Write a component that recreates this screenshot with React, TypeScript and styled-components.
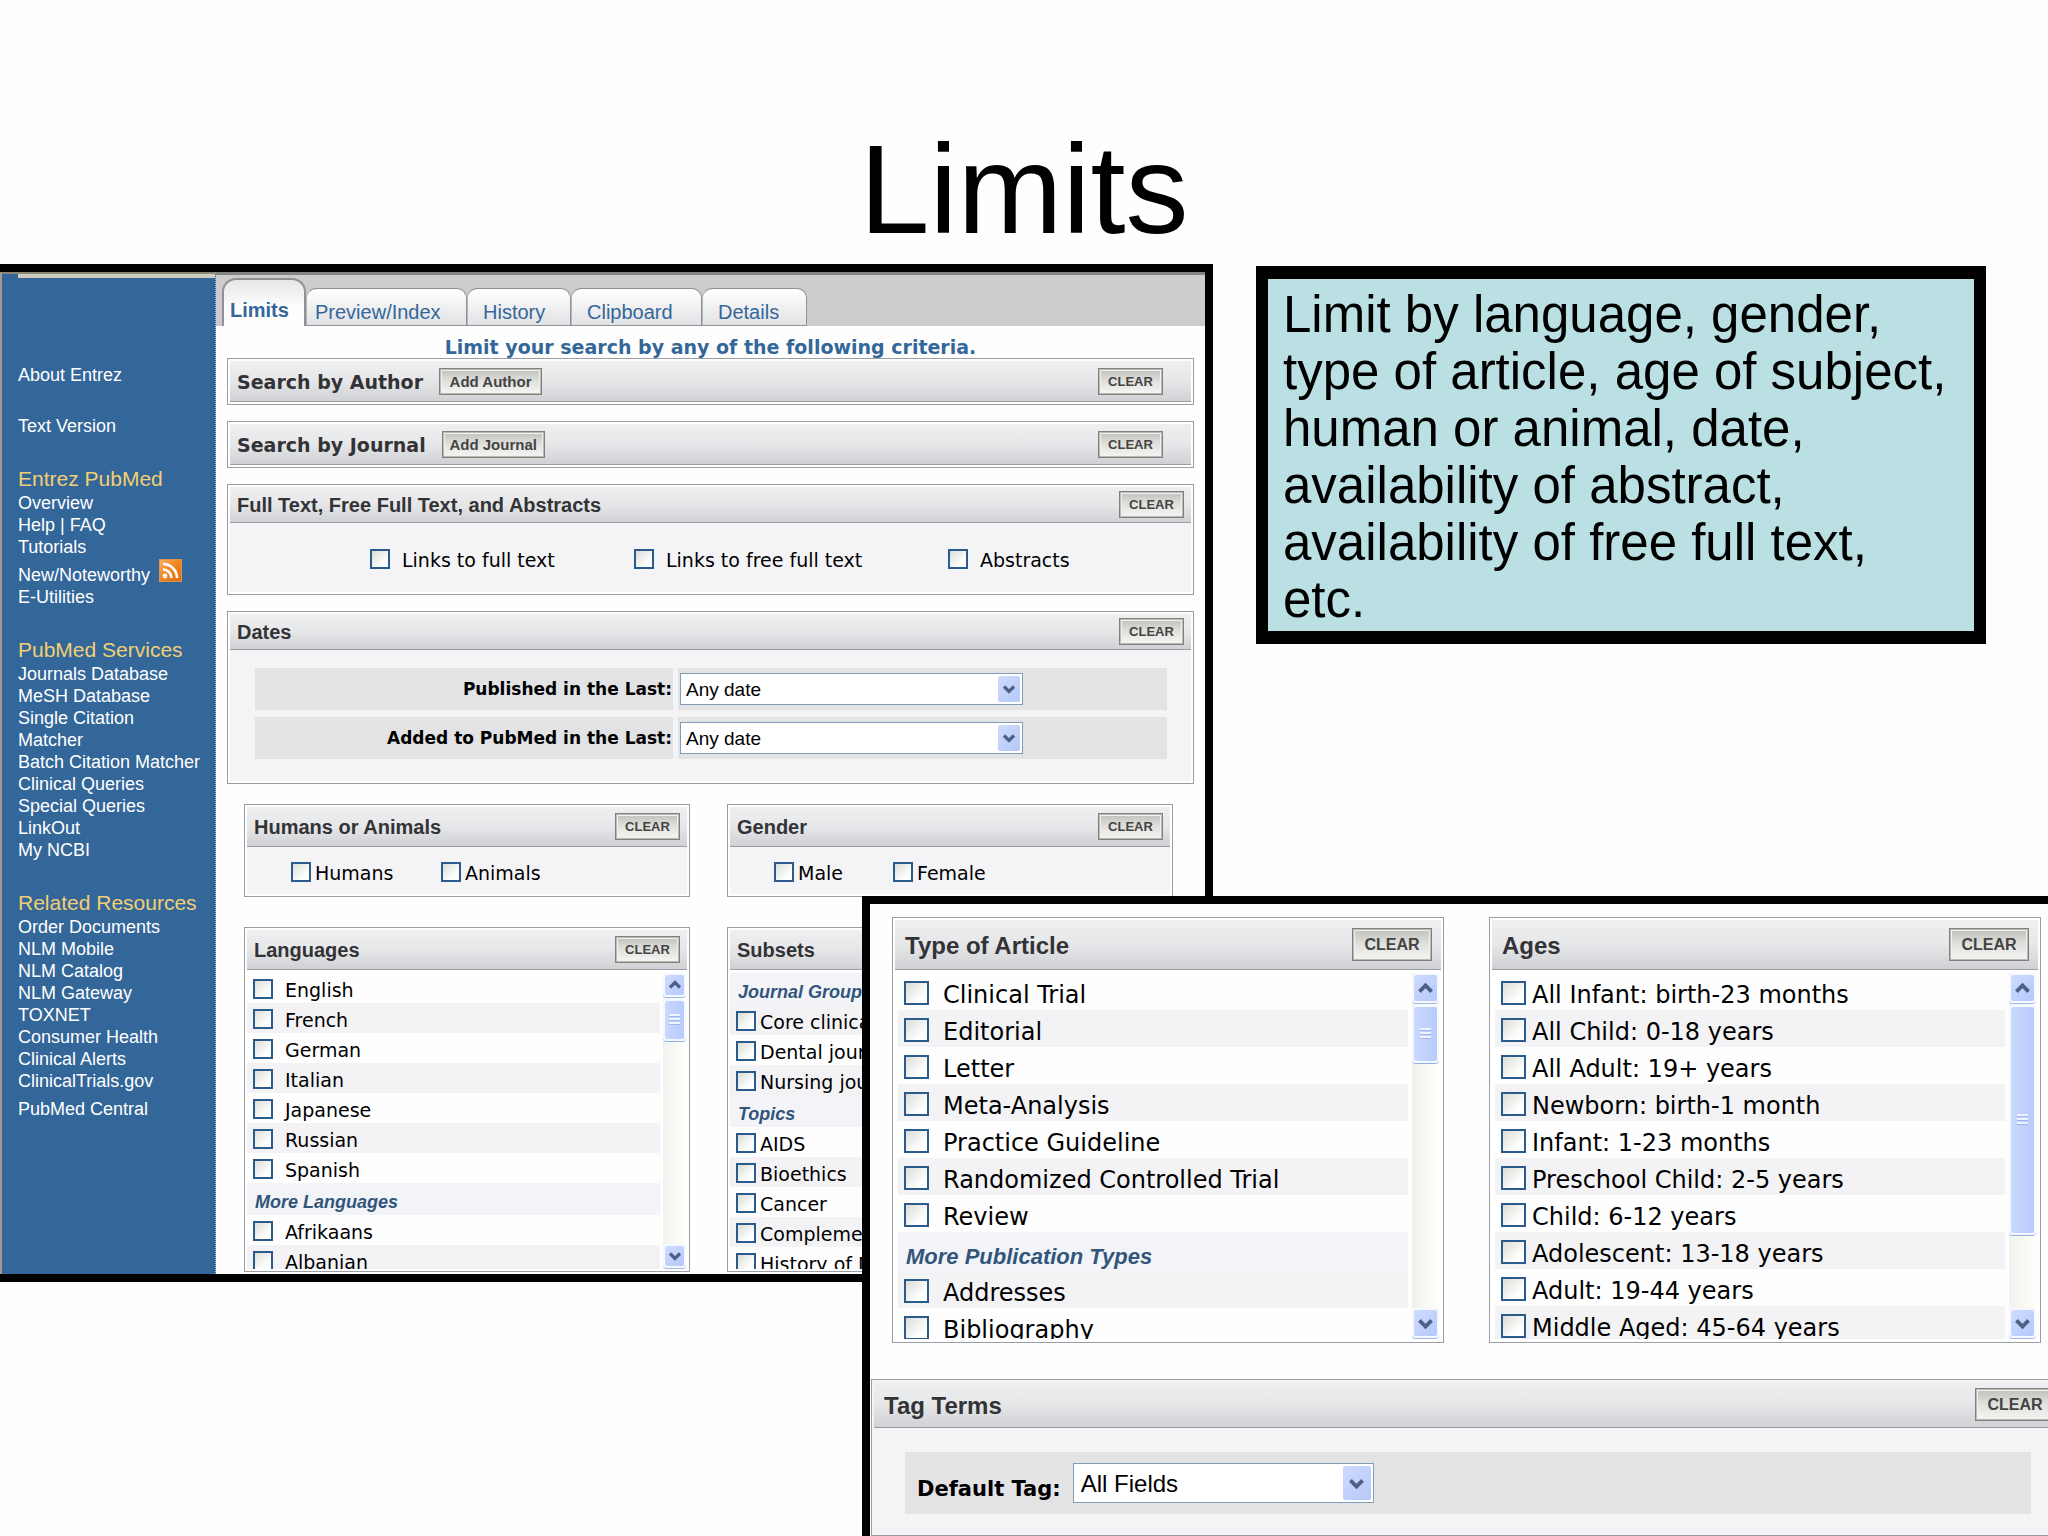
import React, { useId } from "react";
import styled, { createGlobalStyle, css } from "styled-components";

const sans = `"Liberation Sans", Arial, sans-serif`;
const wide = `"DejaVu Sans", Verdana, sans-serif`;

const GlobalStyle = createGlobalStyle`
  *, *::before, *::after { box-sizing: border-box; }
  body { margin: 0; background: #fefefe; font-family: ${sans}; color: #000; }
  h1, h2, h3, p, ul { margin: 0; padding: 0; }
  ul { list-style: none; }
`;

/* ---------- slide ---------- */

const Slide = styled.main`
  position: relative;
  min-height: 100vh;
  overflow: hidden;
`;

const Title = styled.h1`
  padding: 126px 0 10px;
  font-size: 126px;
  line-height: 128px;
  font-weight: 400;
  text-align: center;
`;

const Columns = styled.div`
  display: grid;
  grid-template-columns: 1213fr 730fr;
  gap: 43px;
  align-items: start;
  padding-right: 62px;
`;

const Callout = styled.p`
  margin-top: 2px;
  padding: 7px 24px 3px 15px;
  border: solid #000;
  border-width: 13px 12px;
  background: #bbe0e3;
  font-size: 51px;
  line-height: 57px;
`;

const LimitsWindow = styled.section`
  display: flex;
  border: 8px solid #000;
  border-left: 0;
  background: #fefefe;
`;

/* ---------- sidebar ---------- */

const Sidebar = styled.nav`
  flex: none;
  width: 216px;
  border-top: 2px solid #8b8776;
  border-left: 2px solid #a39a94;
  border-right: 1px dotted #a9bddc;
  background: #336699;
`;

const SidebarRule = styled.div`
  height: 4px;
  margin-left: 16px;
  background: #cfccc0;
`;

const SidebarBody = styled.div`
  padding: 86px 0 0 16px;
`;

const NavGroup = styled.div`
  margin-top: 30px;
`;

const NavHeading = styled.h2`
  padding-bottom: 1px;
  color: #f2cf74;
  font-size: 21px;
  line-height: 24px;
  font-weight: 400;
`;

const NavLink = styled.a<{ $before?: number }>`
  display: block;
  margin-top: ${(p) => p.$before ?? 0}px;
  color: #fff;
  font-size: 18px;
  line-height: 22px;
  text-decoration: none;
`;

const FeedRow = styled.div`
  display: flex;
  align-items: flex-end;
  gap: 9px;
  height: 28px;
`;

const FeedSvg = styled.svg`
  display: block;
  width: 23px;
  height: 23px;
  margin-bottom: 4px;
`;

/* ---------- tabs ---------- */

const Main = styled.div`
  flex: 1;
  min-width: 0;
`;

const TabStrip = styled.div`
  display: flex;
  align-items: flex-end;
  height: 54px;
  padding-left: 6px;
  border-top: 3px solid #848484;
  background: #cccccd;
`;

const Tab = styled.a<{ $width: number; $pad: number; $active?: boolean }>`
  width: ${(p) => p.$width}px;
  height: 38px;
  padding-left: ${(p) => p.$pad}px;
  border: 1px solid #8f9196;
  border-left-width: 0;
  border-radius: 10px 10px 0 0;
  background: linear-gradient(#ffffff, #e2e2e5);
  color: #336699;
  font-size: 20px;
  line-height: 46px;
  text-decoration: none;
  box-shadow: inset 1px 0 #b5b6ba;
  ${(p) =>
    p.$active &&
    css`
      height: 48px;
      border-width: 2px 2px 0 2px;
      border-radius: 14px 14px 0 0;
      background: linear-gradient(#e6e6e8, #fefefe 60%);
      font-weight: 700;
      line-height: 60px;
      box-shadow: none;
    `}
`;

const Body = styled.div`
  padding: 0 11px 2px 11px;
`;

const Intro = styled.p`
  padding-top: 10px;
  color: #336699;
  font: 700 19px/22px ${wide};
  text-align: center;
`;

const Stack = styled.div`
  display: grid;
  gap: 16px;
`;

const Pair = styled.div<{ $top: number }>`
  display: grid;
  grid-template-columns: minmax(0, 1fr) minmax(0, 1fr);
  gap: 37px;
  padding: ${(p) => p.$top}px 21px 0 17px;
`;

/* ---------- panels ---------- */

const PanelBox = styled.section`
  padding: 2px;
  border: 1px solid #9a9da1;
  background: #fefefe;
`;

const PanelHead = styled.header<{ $h: number; $right: number; $large?: boolean }>`
  display: flex;
  align-items: center;
  gap: 16px;
  height: ${(p) => p.$h}px;
  padding: 0 ${(p) => p.$right}px 0 ${(p) => (p.$large ? 10 : 7)}px;
  border-bottom: 1px solid #9a9da1;
  background: linear-gradient(#efeff1, #e6e7e9 50%, #cfd1d4);
`;

const PanelTitle = styled.h3<{ $wide?: boolean; $large?: boolean }>`
  padding-top: 2px;
  color: #333336;
  font: 700 ${(p) => (p.$large ? 24 : p.$wide ? 19 : 20)}px ${(p) => (p.$wide ? wide : sans)};
`;

const PushRight = styled.div`
  margin-left: auto;
`;

const PushButton = styled.button<{ $size?: "small" | "large" | "wide" }>`
  display: block;
  width: ${(p) => (p.$size === "large" ? 80 : p.$size === "wide" ? 103 : 65)}px;
  height: ${(p) => (p.$size === "large" ? 33 : 27)}px;
  padding: 0;
  border: 1px solid #80807d;
  background: linear-gradient(#bebebb, #dededb 45%, #f6f6f4);
  box-shadow: inset 0 0 0 1px #b9b9b5, inset 0 0 0 2px #f0f0ee;
  color: #444442;
  font: 700 ${(p) => (p.$size === "large" ? 16 : p.$size === "wide" ? 15 : 13)}px ${sans};
`;

const CheckArea = styled.div<{ $cols: string; $pad: number; $h: number }>`
  display: grid;
  grid-template-columns: ${(p) => p.$cols};
  align-items: center;
  height: ${(p) => p.$h}px;
  padding: 2px 0 0 ${(p) => p.$pad}px;
  background: #f4f4f7;
`;

const CheckLine = styled.span<{ $gap: number; $large?: boolean }>`
  display: flex;
  align-items: center;
  gap: ${(p) => p.$gap}px;
  font: ${(p) => (p.$large ? 24 : 19)}px ${wide};
  white-space: nowrap;

  input {
    flex: none;
    appearance: none;
    width: ${(p) => (p.$large ? 25 : 20)}px;
    height: ${(p) => (p.$large ? 24 : 20)}px;
    margin: 0;
    border: 2px solid #2a5b8c;
    background: linear-gradient(135deg, #dcdcd7, #ffffff 75%);
  }
  label {
    padding-top: ${(p) => (p.$large ? 4 : 2)}px;
  }
`;

/* ---------- scrolling lists ---------- */

const ListFrame = styled.div<{ $large?: boolean }>`
  display: flex;
  height: ${(p) => (p.$large ? 370 : 299)}px;
  padding: ${(p) => (p.$large ? "3px 2px 1px 3px" : "3px 1px 0 0")};
  background: #fefefe;
`;

const List = styled.ul`
  flex: 1;
  min-width: 0;
  overflow: hidden;
`;

const ListRow = styled.li<{ $shade: boolean; $large?: boolean }>`
  height: ${(p) => (p.$large ? 37 : 30)}px;
  padding: ${(p) => (p.$large ? "8px 0 0 6px" : "6px 0 0 6px")};
  background: ${(p) => (p.$shade ? "#f3f3f6" : "#fefefe")};

  ${CheckLine} {
    height: ${(p) => (p.$large ? 24 : 20)}px;
  }
`;

const ListHeading = styled.li<{ $large?: boolean }>`
  height: ${(p) => (p.$large ? 39 : 32)}px;
  padding-left: 8px;
  background: #f3f4f8;
  color: #31557b;
  font: italic 700 ${(p) => (p.$large ? 22 : 18)}px/${(p) => (p.$large ? 50 : 38)}px ${sans};
  white-space: nowrap;
`;

const ScrollTrack = styled.div<{ $large?: boolean }>`
  display: flex;
  flex-direction: column;
  flex: none;
  gap: 2px;
  width: ${(p) => (p.$large ? 27 : 23)}px;
  margin-left: ${(p) => (p.$large ? 4 : 3)}px;
  padding-bottom: 1px;
  background: linear-gradient(90deg, #f1f1ee, #fefefb);
`;

const ScrollKey = styled.button<{ $large?: boolean; $end?: boolean }>`
  display: grid;
  place-items: center;
  height: ${(p) => (p.$large ? 30 : 24)}px;
  margin: ${(p) => (p.$end ? "auto" : "0")} 0 0;
  padding: 0;
  border: 2px solid #f6f8ff;
  border-radius: 4px;
  background: linear-gradient(135deg, #d0dcff, #b3c8fb);
  box-shadow: 0 1px #9fb8ea;
`;

const ScrollThumb = styled.div<{ $h: number }>`
  display: grid;
  place-items: center;
  height: ${(p) => p.$h}px;
  border: 2px solid #f6f8ff;
  border-radius: 4px;
  background: linear-gradient(90deg, #cbd8ff, #b7cbfb);
  box-shadow: 0 1px #8faee6;
`;

const Grip = styled.div`
  width: 11px;
  height: 12px;
  background: repeating-linear-gradient(#eef3ff 0 2px, #9db5ee 2px 3px, transparent 3px 4px);
`;

/* ---------- form rows ---------- */

const DateBody = styled.div`
  display: grid;
  gap: 9px;
  padding: 18px 24px 24px 25px;
  background: #f4f4f7;
`;

const DateRow = styled.div`
  display: grid;
  grid-template-columns: 418px minmax(0, 1fr);
  gap: 5px;
  height: 40px;
`;

const DateLabel = styled.label`
  padding-right: 1px;
  background: #e3e3e6;
  font: 700 17px/42px ${wide};
  text-align: right;
`;

const DateCell = styled.div`
  display: flex;
  align-items: center;
  padding-left: 2px;
  background: #e3e3e6;
`;

const SelectWrap = styled.div<{ $large?: boolean }>`
  position: relative;
  width: ${(p) => (p.$large ? 301 : 343)}px;

  select {
    display: block;
    appearance: none;
    width: 100%;
    height: ${(p) => (p.$large ? 40 : 32)}px;
    padding: 0 30px 0 ${(p) => (p.$large ? 7 : 5)}px;
    border: 1px solid #7f9db9;
    border-radius: 0;
    background: #fff;
    color: #000;
    font: ${(p) => (p.$large ? 24 : 19)}px ${sans};
  }
`;

const SelectKey = styled.span<{ $large?: boolean }>`
  position: absolute;
  top: 3px;
  right: 3px;
  bottom: 3px;
  display: grid;
  place-items: center;
  width: ${(p) => (p.$large ? 28 : 22)}px;
  border-radius: 2px;
  background: linear-gradient(135deg, #cfdbff, #b4c8f8);
  pointer-events: none;
`;

/* ---------- overlapping window ---------- */

const DetailWindow = styled.section`
  position: absolute;
  top: 896px;
  right: 0;
  bottom: 0;
  left: 862px;
  display: flex;
  flex-direction: column;
  overflow: hidden;
  border: solid #000;
  border-width: 8px 0 0 8px;
  background: #fefefe;
`;

const DetailPair = styled.div`
  display: grid;
  grid-template-columns: minmax(0, 1fr) minmax(0, 1fr);
  gap: 45px;
  padding: 13px 7px 36px 22px;
`;

const TagPanel = styled(PanelBox)`
  flex: 1;
  margin: 0 -20px 0 1px;
  background: #f4f4f7;
`;

const TagRow = styled.div`
  display: flex;
  align-items: center;
  gap: 12px;
  height: 62px;
  margin: 24px 34px 0 31px;
  padding-left: 12px;
  background: #e3e2e5;

  label {
    padding-top: 12px;
    font: 700 21px ${wide};
  }
`;

/* ---------- pieces ---------- */

function Chevron({ up, size = 14 }: { up?: boolean; size?: number }) {
  return (
    <svg width={size} height={size} viewBox="0 0 14 14" aria-hidden="true">
      <path
        d={up ? "M2 9.5 7 4.5 12 9.5" : "M2 4.5 7 9.5 12 4.5"}
        fill="none"
        stroke="#4d6185"
        strokeWidth="3.2"
      />
    </svg>
  );
}

function FeedIcon() {
  return (
    <FeedSvg viewBox="0 0 23 23" role="img" aria-label="RSS">
      <defs>
        <linearGradient id="feed" x1="0" y1="0" x2="1" y2="1">
          <stop offset="0" stopColor="#f9b262" />
          <stop offset="0.5" stopColor="#f08420" />
          <stop offset="1" stopColor="#dd6a10" />
        </linearGradient>
      </defs>
      <rect x="0.5" y="0.5" width="22" height="22" fill="url(#feed)" stroke="#d9944f" />
      <circle cx="6" cy="17" r="2.4" fill="#fff" />
      <path d="M4 10.5a8.5 8.5 0 0 1 8.5 8.5M4 5a14 14 0 0 1 14 14" fill="none" stroke="#fff" strokeWidth="2.6" />
    </FeedSvg>
  );
}

function Check({ text, gap, large }: { text: string; gap: number; large?: boolean }) {
  const id = useId();
  return (
    <CheckLine $gap={gap} $large={large}>
      <input type="checkbox" id={id} />
      <label htmlFor={id}>{text}</label>
    </CheckLine>
  );
}

interface PanelProps {
  title: string;
  head: number;
  right?: number;
  wideTitle?: boolean;
  large?: boolean;
  action?: string;
  children?: React.ReactNode;
}

function PanelHeader({ title, head, right = 7, wideTitle, large, action }: PanelProps) {
  return (
    <PanelHead $h={head} $right={right} $large={large}>
      <PanelTitle $wide={wideTitle} $large={large}>{title}</PanelTitle>
      {action && <PushButton type="button" $size="wide">{action}</PushButton>}
      <PushRight>
        <PushButton type="button" $size={large ? "large" : "small"}>CLEAR</PushButton>
      </PushRight>
    </PanelHead>
  );
}

function Panel(props: PanelProps) {
  return (
    <PanelBox>
      <PanelHeader {...props} />
      {props.children}
    </PanelBox>
  );
}

type Entry = { text: string; shade?: boolean; heading?: boolean };

function ScrollList({ entries, gap, thumb, large }: { entries: Entry[]; gap: number; thumb: number; large?: boolean }) {
  return (
    <ListFrame $large={large}>
      <List>
        {entries.map((e) =>
          e.heading ? (
            <ListHeading key={e.text} $large={large}>{e.text}</ListHeading>
          ) : (
            <ListRow key={e.text} $shade={!!e.shade} $large={large}>
              <Check text={e.text} gap={gap} large={large} />
            </ListRow>
          )
        )}
      </List>
      <ScrollTrack $large={large}>
        <ScrollKey type="button" aria-label="Scroll up" $large={large}>
          <Chevron up size={large ? 17 : 14} />
        </ScrollKey>
        <ScrollThumb $h={thumb}><Grip /></ScrollThumb>
        <ScrollKey type="button" aria-label="Scroll down" $large={large} $end>
          <Chevron size={large ? 17 : 14} />
        </ScrollKey>
      </ScrollTrack>
    </ListFrame>
  );
}

function Dropdown({ id, value, large }: { id: string; value: string; large?: boolean }) {
  return (
    <SelectWrap $large={large}>
      <select id={id} defaultValue={value}>
        <option>{value}</option>
      </select>
      <SelectKey $large={large}><Chevron size={large ? 17 : 14} /></SelectKey>
    </SelectWrap>
  );
}

/* ---------- data ---------- */

const services = ["Journals Database", "MeSH Database", "Single Citation|Matcher", "Batch Citation Matcher", "Clinical Queries", "Special Queries", "LinkOut", "My NCBI"];
const resources = ["Order Documents", "NLM Mobile", "NLM Catalog", "NLM Gateway", "TOXNET", "Consumer Health", "Clinical Alerts", "ClinicalTrials.gov"];

const striped = (texts: string[], first = false): Entry[] =>
  texts.map((text, i) => ({ text, shade: (i % 2 === 1) !== first }));

const languages: Entry[] = [
  ...striped(["English", "French", "German", "Italian", "Japanese", "Russian", "Spanish"]),
  { text: "More Languages", heading: true },
  ...striped(["Afrikaans", "Albanian"]),
];

const subsets: Entry[] = [
  { text: "Journal Groups", heading: true },
  ...striped(["Core clinical journals", "Dental journals", "Nursing journals"], true),
  { text: "Topics", heading: true },
  ...striped(["AIDS", "Bioethics", "Cancer", "Complementary Medicine", "History of Medicine"]),
];

const articleTypes: Entry[] = [
  ...striped(["Clinical Trial", "Editorial", "Letter", "Meta-Analysis", "Practice Guideline", "Randomized Controlled Trial", "Review"]),
  { text: "More Publication Types", heading: true },
  ...striped(["Addresses", "Bibliography"], true),
];

const ages = striped([
  "All Infant: birth-23 months",
  "All Child: 0-18 years",
  "All Adult: 19+ years",
  "Newborn: birth-1 month",
  "Infant: 1-23 months",
  "Preschool Child: 2-5 years",
  "Child: 6-12 years",
  "Adolescent: 13-18 years",
  "Adult: 19-44 years",
  "Middle Aged: 45-64 years",
]);

function SideNav() {
  return (
    <Sidebar aria-label="Entrez">
      <SidebarRule />
      <SidebarBody>
        <NavLink href="#">About Entrez</NavLink>
        <NavLink href="#" $before={29}>Text Version</NavLink>
        <NavGroup>
          <NavHeading>Entrez PubMed</NavHeading>
          <NavLink href="#">Overview</NavLink>
          <NavLink href="#">Help | FAQ</NavLink>
          <NavLink href="#">Tutorials</NavLink>
          <FeedRow>
            <NavLink href="#">New/Noteworthy</NavLink>
            <FeedIcon />
          </FeedRow>
          <NavLink href="#">E-Utilities</NavLink>
        </NavGroup>
        <NavGroup>
          <NavHeading>PubMed Services</NavHeading>
          {services.map((s) => (
            <NavLink href="#" key={s}>
              {s.split("|").map((part, i) => (
                <React.Fragment key={part}>
                  {i > 0 && <br />}
                  {part}
                </React.Fragment>
              ))}
            </NavLink>
          ))}
        </NavGroup>
        <NavGroup>
          <NavHeading>Related Resources</NavHeading>
          {resources.map((r) => (
            <NavLink href="#" key={r}>{r}</NavLink>
          ))}
          <NavLink href="#" $before={6}>PubMed Central</NavLink>
        </NavGroup>
      </SidebarBody>
    </Sidebar>
  );
}

export default function App() {
  return (
    <>
      <GlobalStyle />
      <Slide>
        <Title>Limits</Title>
        <Columns>
          <LimitsWindow>
            <SideNav />
            <Main>
              <TabStrip>
                <Tab href="#" $width={84} $pad={6} $active>Limits</Tab>
                <Tab href="#" $width={161} $pad={9}>Preview/Index</Tab>
                <Tab href="#" $width={104} $pad={16}>History</Tab>
                <Tab href="#" $width={131} $pad={16}>Clipboard</Tab>
                <Tab href="#" $width={105} $pad={16}>Details</Tab>
              </TabStrip>
              <Body>
                <Intro>Limit your search by any of the following criteria.</Intro>
                <Stack>
                  <Panel title="Search by Author" head={41} right={28} wideTitle action="Add Author" />
                  <Panel title="Search by Journal" head={41} right={28} wideTitle action="Add Journal" />
                  <Panel title="Full Text, Free Full Text, and Abstracts" head={36}>
                    <CheckArea $cols="264px 314px auto" $pad={140} $h={69}>
                      <Check text="Links to full text" gap={12} />
                      <Check text="Links to free full text" gap={12} />
                      <Check text="Abstracts" gap={12} />
                    </CheckArea>
                  </Panel>
                  <Panel title="Dates" head={36}>
                    <DateBody>
                      <DateRow>
                        <DateLabel htmlFor="published">Published in the Last:</DateLabel>
                        <DateCell><Dropdown id="published" value="Any date" /></DateCell>
                      </DateRow>
                      <DateRow>
                        <DateLabel htmlFor="added">Added to PubMed in the Last:</DateLabel>
                        <DateCell><Dropdown id="added" value="Any date" /></DateCell>
                      </DateRow>
                    </DateBody>
                  </Panel>
                </Stack>
                <Pair $top={20}>
                  <Panel title="Humans or Animals" head={40}>
                    <CheckArea $cols="150px auto" $pad={44} $h={47}>
                      <Check text="Humans" gap={4} />
                      <Check text="Animals" gap={4} />
                    </CheckArea>
                  </Panel>
                  <Panel title="Gender" head={40}>
                    <CheckArea $cols="119px auto" $pad={44} $h={47}>
                      <Check text="Male" gap={4} />
                      <Check text="Female" gap={4} />
                    </CheckArea>
                  </Panel>
                </Pair>
                <Pair $top={30}>
                  <Panel title="Languages" head={40}>
                    <ScrollList entries={languages} gap={12} thumb={42} />
                  </Panel>
                  <Panel title="Subsets" head={40}>
                    <ScrollList entries={subsets} gap={4} thumb={42} />
                  </Panel>
                </Pair>
              </Body>
            </Main>
          </LimitsWindow>
          <Callout>
            Limit by language, gender, type of article, age of subject, human or animal, date,
            availability of abstract, availability of free full text, etc.
          </Callout>
        </Columns>

        <DetailWindow>
          <DetailPair>
            <Panel title="Type of Article" head={50} right={9} large>
              <ScrollList entries={articleTypes} gap={14} thumb={58} large />
            </Panel>
            <Panel title="Ages" head={50} right={9} large>
              <ScrollList entries={ages} gap={6} thumb={230} large />
            </Panel>
          </DetailPair>
          <TagPanel>
            <PanelHeader title="Tag Terms" head={46} right={10} large />
            <TagRow>
              <label htmlFor="tag">Default Tag:</label>
              <Dropdown id="tag" value="All Fields" large />
            </TagRow>
          </TagPanel>
        </DetailWindow>
      </Slide>
    </>
  );
}
